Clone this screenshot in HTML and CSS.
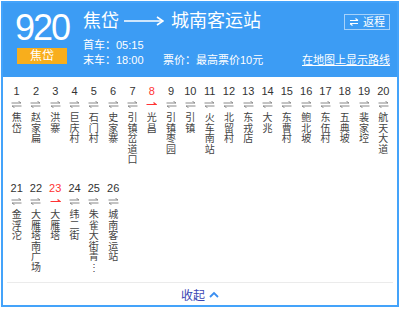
FILE: index.html
```html
<!DOCTYPE html>
<html lang="zh-CN">
<head>
  <meta charset="UTF-8" />
  <title>920路</title>
  <link rel="stylesheet" href="styles.css">
</head>
<body>
  <div class="line-card">
    <div class="header">
      <div class="line-no">
        <div class="number">920</div>
        <div class="badge">焦岱</div>
      </div>
      <div class="line-info">
        <div class="title-row">
          <span class="terminal">焦岱</span>
          <svg class="long-arrow" width="40" height="10" viewBox="0 0 40 10">
            <path d="M0 5H38" stroke="#fff" stroke-width="1.6"/>
            <path d="M33 1L39 5L33 9" fill="none" stroke="#fff" stroke-width="1.6"/>
          </svg>
          <span class="terminal">城南客运站</span>
          <span class="return-btn">
            <svg width="10" height="8" viewBox="0 0 10 8">
              <path d="M1 2.5H9M6.5 0.5L9 2.5" fill="none" stroke="#fff" stroke-width="1.2"/>
              <path d="M9 5.5H1M3.5 7.5L1 5.5" fill="none" stroke="#fff" stroke-width="1.2"/>
            </svg>
            返程
          </span>
        </div>
        <div class="info-row">
          <span class="time">首车：05:15</span>
        </div>
        <div class="info-row">
          <span class="time">末车：18:00</span>
          <span class="fare">票价：最高票价10元</span>
          <a class="map-link" href="#">在地图上显示路线</a>
        </div>
      </div>
    </div>

    <div class="stations" id="stations"></div>

    <div class="footer">
      <span class="collapse">收起</span>
      <svg width="10" height="7" viewBox="0 0 10 7">
        <path d="M1 6L5 2L9 6" fill="none" stroke="#3a8ef0" stroke-width="1.8"/>
      </svg>
    </div>
  </div>

  <script>
    const stations = ['焦岱', '赵家扁', '洪寨', '巨庆村', '石门村', '史家寨', '引镇岔道口', '光昌',
      '引镇枣园', '引镇', '火车南站', '北留村', '东戎店', '大兆', '东曹村', '鲍北坡', '东伍村',
      '五典坡', '裴家埪', '航天大道', '金浮沱', '大雁塔南广场', '大雁塔', '纬二街', '朱雀大街青⋮', '城南客运站'];
    const current = [8, 23];

    const both = '<svg width="11" height="7" viewBox="0 0 11 7">' +
      '<path d="M0.5 2H10L7.5 0.3" fill="none" stroke="#888" stroke-width="1"/>' +
      '<path d="M10.5 5H1L3.5 6.7" fill="none" stroke="#888" stroke-width="1"/></svg>';
    const one = '<svg width="11" height="7" viewBox="0 0 11 7">' +
      '<path d="M0.5 3.5H10L7.5 1.5" fill="none" stroke="#f33" stroke-width="1.2"/></svg>';

    const list = document.getElementById('stations');
    stations.forEach(function(name, i) {
      const no = i + 1;
      const on = current.includes(no);
      const item = document.createElement('div');
      item.className = 'station' + (on ? ' active' : '');
      item.innerHTML = '<span class="st-no">' + no + '</span>' +
        '<span class="st-dir">' + (on ? one : both) + '</span>' +
        '<span class="st-name">' + name + '</span>';
      list.appendChild(item);
    });
  </script>
</body>
</html>
```

FILE: styles.css
```css
body {
  margin: 1px;
  font-family: "Liberation Sans", "Noto Sans CJK SC", sans-serif;
  background: #fff;
}

.line-card {
  width: 394px;
  height: 302px;
  border: 2px solid #44a3fa;
  display: flex;
  flex-direction: column;
}

.header {
  height: 74px;
  box-sizing: border-box;
  background: #3c9cf4;
  color: #fff;
  display: flex;
  padding: 7px 7px 0 10px;
}

.line-no {
  width: 58px;
  display: flex;
  flex-direction: column;
  align-items: center;
}

.number {
  font-size: 36px;
  line-height: 36px;
  letter-spacing: -2px;
}

.badge {
  margin-top: 2px;
  width: 50px;
  height: 16px;
  background: #f8ae1c;
  font-size: 12px;
  line-height: 16px;
  text-align: center;
}

.line-info {
  flex: 1;
  margin-left: 12px;
}

.title-row {
  height: 28px;
  display: flex;
  align-items: flex-start;
}

.terminal {
  font-size: 18px;
  line-height: 22px;
}

.long-arrow {
  margin: 6px 7px 0 5px;
}

.return-btn {
  margin-left: auto;
  margin-top: 4px;
  height: 14px;
  padding: 0 4px;
  border: 1px solid rgba(255, 255, 255, 0.55);
  font-size: 11px;
  line-height: 14px;
  display: flex;
  align-items: center;
  gap: 4px;
}

.info-row {
  display: flex;
  font-size: 11px;
  line-height: 15px;
}

.time {
  width: 80px;
}

.map-link {
  margin-left: auto;
  color: #fff;
}

.stations {
  flex: 1;
  display: grid;
  grid-template-columns: repeat(20, 1fr);
  grid-template-rows: 97px 97px;
  padding: 7px 4px 0;
  margin-bottom: 4px;
}

.station {
  display: flex;
  flex-direction: column;
  align-items: center;
  color: #444;
}

.st-no {
  font-size: 11px;
  line-height: 14px;
  color: #333;
}

.active .st-no {
  color: #f33;
}

.st-dir {
  height: 7px;
  margin-top: 3px;
  display: flex;
}

.st-name {
  width: 10px;
  margin-top: 5px;
  font-size: 10px;
  line-height: 10.5px;
  word-break: break-all;
}

.footer {
  margin: 0 4px;
  border-top: 1px solid #ebebeb;
  height: 22px;
  display: flex;
  justify-content: center;
  align-items: center;
  gap: 4px;
}

.collapse {
  font-size: 12px;
  color: #3b45b3;
}
```
